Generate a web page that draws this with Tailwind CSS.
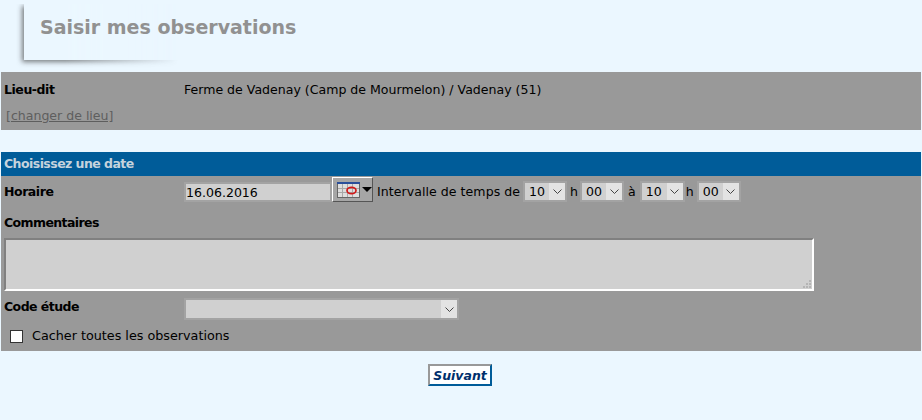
<!DOCTYPE html>
<html lang="fr">
<head>
<meta charset="utf-8">
<title>Saisir mes observations</title>
<script src="https://cdn.jsdelivr.net/npm/@tailwindcss/browser@4"></script>
</head>
<body class="bg-[#ebf7ff] font-['DejaVu_Sans',Verdana,sans-serif] text-[12.55px] leading-[16px] text-black h-[420px] w-[922px] overflow-hidden">
<header class="relative h-[72px] pl-[40px] pt-[15px]">
  <div class="absolute top-[4px] left-[16px] h-[64px] w-[163px] [mask-image:linear-gradient(to_right,#000_30%,transparent_100%)]">
    <div class="ml-[8px] h-[56px] w-[155px] bg-[#ebf7ff] shadow-[-2px_2px_5px_0_rgba(60,60,60,0.65)]"></div>
  </div>
  <h1 class="relative text-[19px] leading-[24px] font-bold text-[#919191] whitespace-nowrap">Saisir mes observations</h1>
</header>
<section class="mx-[1px] h-[58px] bg-[#999999] pl-[3px] pt-[10px]">
  <div class="flex h-[16px]">
    <span class="w-[180px] text-[12.5px] tracking-[-0.45px] font-bold">Lieu-dit</span>
    <span>Ferme de Vadenay (Camp de Mourmelon) / Vadenay (51)</span>
  </div>
  <a class="mt-[10px] ml-[2px] block text-[#5e5e5e] underline">[changer de lieu]</a>
</section>
<div class="mx-[1px] mt-[22px] h-[24px] bg-[#005c99] pl-[3px] pt-[4px] text-[12.5px] tracking-[-0.55px] font-bold text-[#c5d3dd]">Choisissez une date</div>
<section class="mx-[1px] h-[175px] bg-[#999999]">
  <div class="flex h-[32px] items-start pl-[3px]">
    <span class="w-[180px] pt-[8px] text-[12.5px] tracking-[-0.45px] font-bold">Horaire</span>
    <div class="mt-[6px] h-[20px] w-[148px] border-2 border-[#a3a3a3] bg-[#d0d0d0] pt-[1px] leading-[16px]">16.06.2016</div>
    <button class="mt-[1px] flex h-[25px] w-[41px] items-center gap-[2px] border border-t-white border-l-white border-r-[#555] border-b-[#555] bg-[#a6a6a6] pl-[4px]">
      <svg class="shrink-0" width="23" height="16" viewBox="0 0 23 16">
        <rect x="0.5" y="0.5" width="22" height="15" fill="#dedede" stroke="#666"/>
        <rect x="0" y="0" width="23" height="2" fill="#2a4f9a"/>
        <path d="M5.500 2v13M10.500 2v13M15.500 2v13M1 6.500h21M1 10.500h21" stroke="#a8a8a8" stroke-width="1"/>
        <ellipse cx="14.500" cy="8.500" rx="4.500" ry="3.200" fill="none" stroke="#d01818" stroke-width="1.700"/>
      </svg>
      <svg class="shrink-0" width="10" height="5" viewBox="0 0 10 5"><path d="M0 0h10L5 5z" fill="#000"/></svg>
    </button>
    <div class="mt-[5px] ml-[4px] flex h-[21px] items-center whitespace-nowrap">
      <span class="mr-[3px] pt-[1px] tracking-[0.05px]">Intervalle de temps de</span>
      <div class="flex h-[21px] w-[44px] border-2 border-[#a3a3a3] bg-[#d0d0d0]"><span class="flex-1 pl-[4px] pt-[1px]">10</span><span class="flex w-[16px] items-center justify-center bg-[#e3e3e3]"><svg width="9" height="5" viewBox="0 0 9 5"><path d="M.5.5l4 4 4-4" fill="none" stroke="#444"/></svg></span></div>
      <span class="ml-[3px] mr-[2px] pt-[1px]">h</span>
      <div class="flex h-[21px] w-[44px] border-2 border-[#a3a3a3] bg-[#d0d0d0]"><span class="flex-1 pl-[4px] pt-[1px]">00</span><span class="flex w-[16px] items-center justify-center bg-[#e3e3e3]"><svg width="9" height="5" viewBox="0 0 9 5"><path d="M.5.5l4 4 4-4" fill="none" stroke="#444"/></svg></span></div>
      <span class="mx-[4px] pt-[1px]">à</span>
      <div class="flex h-[21px] w-[45px] border-2 border-[#a3a3a3] bg-[#d0d0d0]"><span class="flex-1 pl-[4px] pt-[1px]">10</span><span class="flex w-[16px] items-center justify-center bg-[#e3e3e3]"><svg width="9" height="5" viewBox="0 0 9 5"><path d="M.5.5l4 4 4-4" fill="none" stroke="#444"/></svg></span></div>
      <span class="mx-[1px] pr-[2px] pt-[1px]">h</span>
      <div class="flex h-[21px] w-[44px] border-2 border-[#a3a3a3] bg-[#d0d0d0]"><span class="flex-1 pl-[4px] pt-[1px]">00</span><span class="flex w-[16px] items-center justify-center bg-[#e3e3e3]"><svg width="9" height="5" viewBox="0 0 9 5"><path d="M.5.5l4 4 4-4" fill="none" stroke="#444"/></svg></span></div>
    </div>
  </div>
  <div class="pl-[3px] pt-[7px] text-[12.5px] tracking-[-0.6px] font-bold">Commentaires</div>
  <div class="relative mt-[7px] ml-[3px] h-[53px] w-[810px] border-2 border-t-[#808080] border-l-[#808080] border-r-white border-b-white bg-[#d0d0d0]">
    <svg class="absolute right-[1px] bottom-[1px]" width="8" height="8" viewBox="0 0 8 8"><path d="M6 0h2v2H6zM3 3h2v2H3zM6 3h2v2H6zM0 6h2v2H0zM3 6h2v2H3zM6 6h2v2H6z" fill="#b4b4b4"/></svg>
  </div>
  <div class="mt-[7px] flex h-[22px] items-start pl-[3px]">
    <span class="w-[180px] pt-[1px] text-[12.5px] tracking-[-0.55px] font-bold">Code étude</span>
    <div class="flex h-[22px] w-[275px] border-2 border-[#a3a3a3] bg-[#d0d0d0]"><span class="flex-1"></span><span class="flex w-[16px] items-center justify-center bg-[#e3e3e3]"><svg width="9" height="5" viewBox="0 0 9 5"><path d="M.5.5l4 4 4-4" fill="none" stroke="#444"/></svg></span></div>
  </div>
  <label class="mt-[8px] flex h-[16px] items-center pl-[9px]">
    <span class="h-[13px] w-[13px] border border-[#333] bg-white"></span>
    <span class="ml-[9px] text-[12.75px]">Cacher toutes les observations</span>
  </label>
</section>
<div class="flex justify-center pt-[13px] pr-[2px]">
  <button class="h-[22px] w-[64px] border-2 border-t-[#999] border-l-[#999] border-r-[#005c99] border-b-[#005c99] bg-white pt-[1px] text-[12.5px] leading-[16px] font-bold text-[#002f6c] italic">Suivant</button>
</div>
</body>
</html>
